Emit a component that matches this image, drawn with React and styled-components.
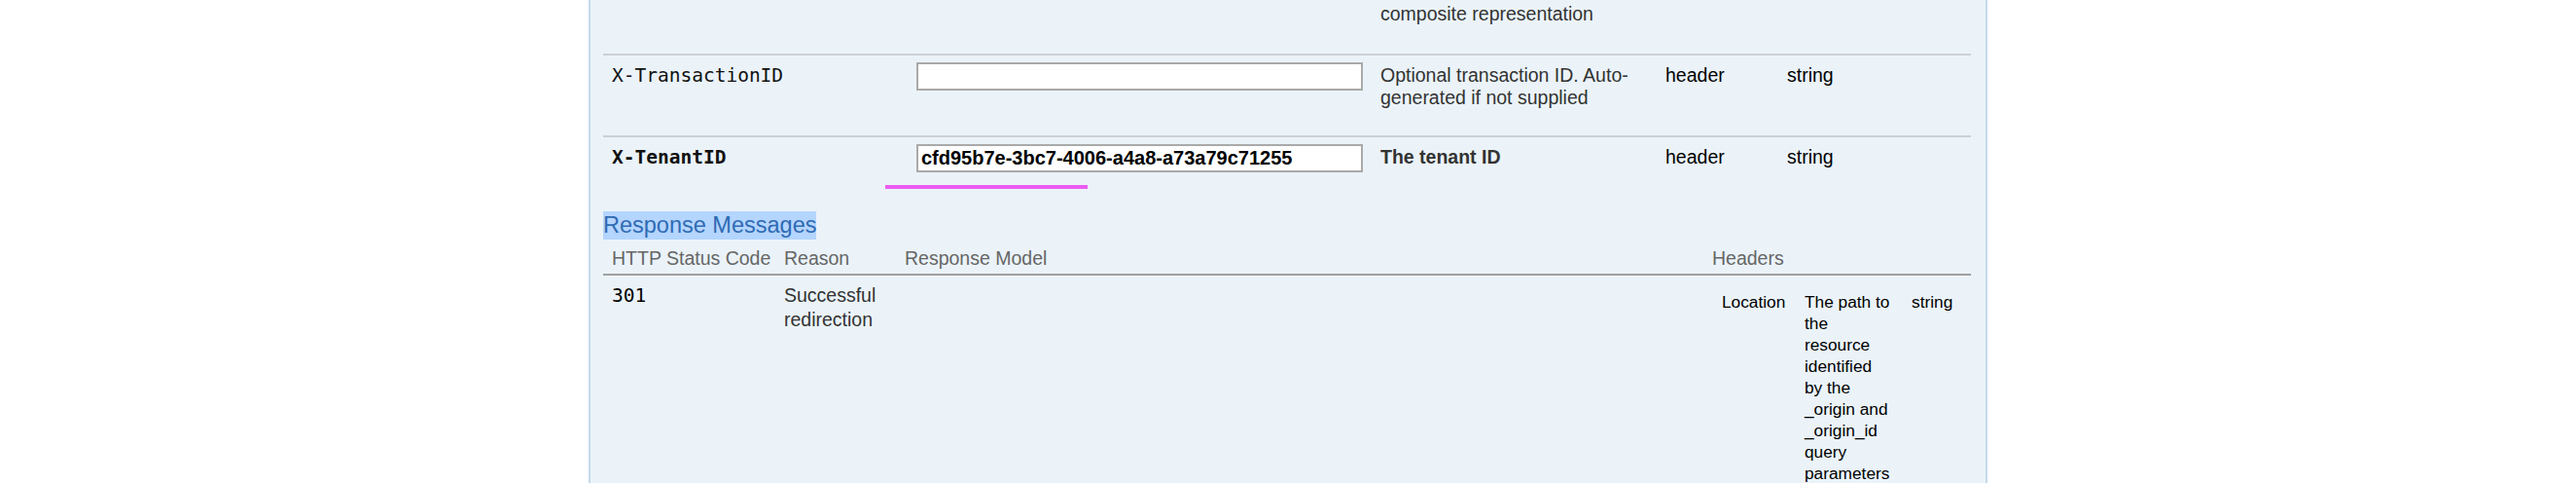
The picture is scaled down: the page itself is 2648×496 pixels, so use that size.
import styled, { createGlobalStyle } from 'styled-components';

const GlobalStyle = createGlobalStyle`
  html, body {
    margin: 0;
    padding: 0;
    background: #fff;
  }
  body {
    font-family: "Liberation Sans", Arial, Helvetica, sans-serif;
    overflow: hidden;
  }
`;

const Panel = styled.div`
  position: relative;
  box-sizing: border-box;
  width: 1438px;
  min-height: 600px;
  margin: 0 auto;
  padding: 0 15px 0 13px;
  background: #ebf3f9;
  border-left: 2px solid #c3d9ec;
  border-right: 2px solid #c3d9ec;
`;

const Table = styled.table`
  width: 100%;
  table-layout: fixed;
  border-collapse: collapse;
  font-size: 19.5px;
  line-height: 23.5px;
  color: #333;
`;

const ParamRow = styled.tr`
  & > td {
    vertical-align: top;
    padding: ${props => props.$pad};
    border-top: ${props => (props.$first ? 'none' : '2px solid #cdd0d3')};
  }
`;

const NameCell = styled.td`
  font-family: "DejaVu Sans Mono", "Liberation Mono", monospace;
  font-size: 19.5px;
  color: #111;
  font-weight: ${props => (props.$required ? 'bold' : 'normal')};
`;

const TextCell = styled.td`
  color: ${props => props.$color || '#333'};
  font-weight: ${props => (props.$bold ? 'bold' : 'normal')};
`;

const ValueInput = styled.input`
  display: block;
  box-sizing: border-box;
  width: 100%;
  height: 29px;
  margin: -2px 0 0;
  padding: 0 3px;
  border: 2px solid #a9a9a9;
  border-radius: 0;
  background: #fff;
  font-family: "Liberation Sans", Arial, sans-serif;
  font-size: 20px;
  font-weight: bold;
  color: #000;
  outline: none;
`;

const Marker = styled.div`
  position: absolute;
  left: 303px;
  top: 190px;
  width: 208px;
  height: 4px;
  background: #ec5cf2;
`;

const SectionTitle = styled.h4`
  margin: 31px 0 0;
  font-size: 23.5px;
  font-weight: normal;
  line-height: 29px;
  color: #2f6bb3;
`;

const Selected = styled.span`
  display: inline-block;
  background: #b4d5fe;
`;

const HeadCell = styled.th`
  text-align: left;
  font-weight: normal;
  color: #666;
  padding: 8px 9px 3.5px;
  border-bottom: 2px solid #a0a0a0;
  white-space: nowrap;
`;

const BodyCell = styled.td`
  vertical-align: top;
  padding: 8px 9px;
  line-height: 25px;
  color: ${props => props.$color || '#333'};
  font-family: ${props =>
    props.$mono ? '"DejaVu Sans Mono", "Liberation Mono", monospace' : 'inherit'};
`;

const HeaderTable = styled.table`
  width: 257px;
  table-layout: fixed;
  border-collapse: collapse;
  font-size: 17.3px;
  line-height: 22px;
  color: #000;
`;

const HeaderCell = styled.td`
  vertical-align: top;
  padding: 8px 10px 0;
`;

const params = [
  { name: '', description: 'composite representation', pad: '3px 9px 28px', first: true },
  {
    name: 'X-TransactionID',
    value: '',
    description: 'Optional transaction ID. Auto-generated if not supplied',
    type: 'header',
    dataType: 'string',
    pad: '9px 9px 26px',
  },
  {
    name: 'X-TenantID',
    value: 'cfd95b7e-3bc7-4006-a4a8-a73a79c71255',
    description: 'The tenant ID',
    type: 'header',
    dataType: 'string',
    required: true,
    pad: '9px 9px 9px',
  },
];

export default function App() {
  return (
    <>
      <GlobalStyle />
      <Panel>
        <Table>
          <colgroup>
            <col style={{ width: 313 }} />
            <col style={{ width: 477 }} />
            <col style={{ width: 293 }} />
            <col style={{ width: 125 }} />
            <col style={{ width: 198 }} />
          </colgroup>
          <tbody>
            {params.map((p, i) => (
              <ParamRow key={i} $pad={p.pad} $first={p.first}>
                <NameCell $required={p.required}>{p.name}</NameCell>
                <td>
                  {p.value !== undefined ? (
                    <ValueInput type="text" defaultValue={p.value} readOnly />
                  ) : null}
                </td>
                <TextCell $bold={p.required}>{p.description}</TextCell>
                <TextCell $color="#000">{p.type}</TextCell>
                <TextCell $color="#000">{p.dataType}</TextCell>
              </ParamRow>
            ))}
          </tbody>
        </Table>
        <Marker />

        <SectionTitle>
          <Selected>Response Messages</Selected>
        </SectionTitle>
        <Table>
          <colgroup>
            <col style={{ width: 177 }} />
            <col style={{ width: 124 }} />
            <col style={{ width: 830 }} />
            <col style={{ width: 275 }} />
          </colgroup>
          <thead>
            <tr>
              <HeadCell>HTTP Status Code</HeadCell>
              <HeadCell>Reason</HeadCell>
              <HeadCell>Response Model</HeadCell>
              <HeadCell>Headers</HeadCell>
            </tr>
          </thead>
          <tbody>
            <tr>
              <BodyCell $mono $color="#000">301</BodyCell>
              <BodyCell>Successful redirection</BodyCell>
              <BodyCell />
              <BodyCell>
                <HeaderTable>
                  <colgroup>
                    <col style={{ width: 85 }} />
                    <col style={{ width: 110 }} />
                    <col style={{ width: 62 }} />
                  </colgroup>
                  <tbody>
                    <tr>
                      <HeaderCell>Location</HeaderCell>
                      <HeaderCell>
                        The path to the resource identified by the _origin and _origin_id query
                        parameters
                      </HeaderCell>
                      <HeaderCell>string</HeaderCell>
                    </tr>
                  </tbody>
                </HeaderTable>
              </BodyCell>
            </tr>
          </tbody>
        </Table>
      </Panel>
    </>
  );
}
